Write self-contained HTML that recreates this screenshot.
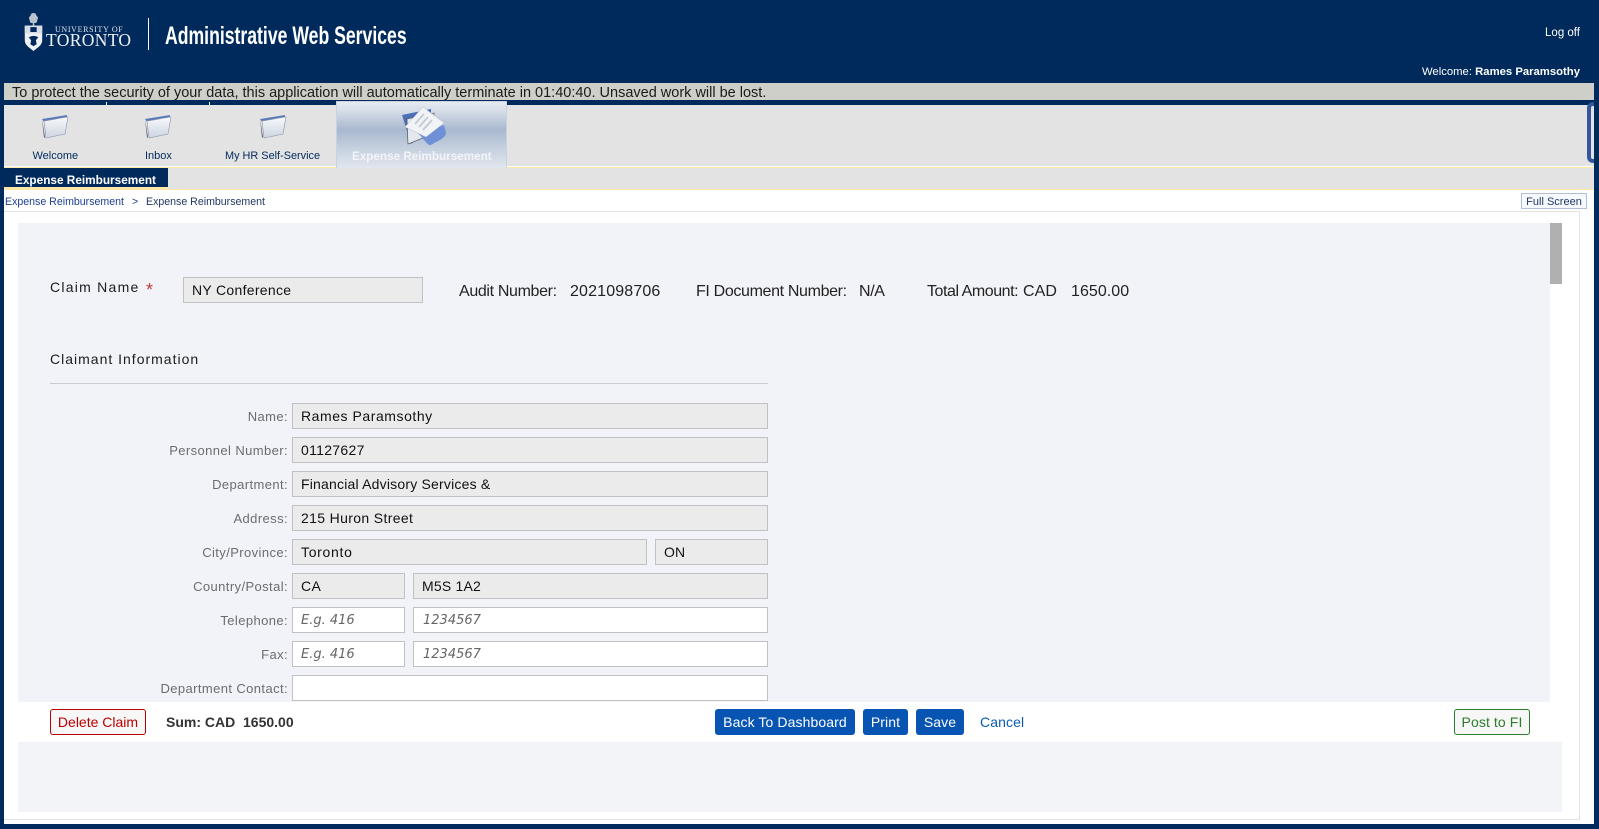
<!DOCTYPE html>
<html><head><meta charset="utf-8"><title>Expense Reimbursement</title>
<style>
html,body{margin:0;padding:0;width:1599px;height:829px;overflow:hidden;background:#002a5c;font-family:"Liberation Sans",sans-serif}
.b{position:absolute}
.t{position:absolute;white-space:nowrap}
.f{position:absolute;box-sizing:border-box;height:26px;border:1px solid #bfc1c3;background:#ebebeb;color:#111;font-size:14px;line-height:25px;padding-left:8px;letter-spacing:.45px;white-space:nowrap}
.w{background:#fff}
.p{color:#666;font-style:italic;font-family:"DejaVu Sans",sans-serif;font-size:13px;letter-spacing:0;line-height:26px}
.l{position:absolute;right:1311px;color:#6a6d70;font-size:13px;letter-spacing:.4px;line-height:18px;white-space:nowrap}
.btn{position:absolute;box-sizing:border-box;top:709px;height:26px;border-radius:3px;font-size:14px;line-height:25px;text-align:center;letter-spacing:.1px}
.blue{background:#0854b3;color:#fff;line-height:26px}
.tab{position:absolute;top:150px;font-size:11px;color:#002a5c;white-space:nowrap}
.info{position:absolute;top:283px;font-size:16px;color:#222;white-space:nowrap;line-height:18px;letter-spacing:-.35px}
</style></head><body>

<!-- logo -->
<svg class="b" style="left:24px;top:12px" width="19" height="40" viewBox="0 0 24 41" preserveAspectRatio="none">
<path d="M12 1c3 0 4 2 3.500 3 2 0 3 3 1 4.500 1 2-2 3.500-3.500 2.500v3h-2v-3c-2 1-4.500-.5-3.500-2.500-2-1.500-1-4.500 1-4.500C8 3 9 1 12 1z" fill="#b9c3d0"/>
<path d="M1 14h22v15c0 5-5 7-11 11C6 36 1 34 1 29z" fill="#eef1f5"/>
<rect x="1" y="14" width="22" height="8" fill="#d8dde5"/><rect x="8" y="15.500" width="8" height="5" fill="#002a5c"/>
<path d="M6 26c4-2 9-2 12 0l-3 3 1 4-4 2-4-2 1-4z" fill="#002a5c"/></svg>
<div class="t" style="left:55px;top:25px;font:8px 'Liberation Serif',serif;color:#dfe4ea;letter-spacing:.65px">UNIVERSITY OF</div>
<div class="t" style="left:46px;top:30px;font:17.500px/20px 'Liberation Serif',serif;color:#eef1f5;letter-spacing:.35px">TORONTO</div>
<div class="b" style="left:148px;top:18px;width:1px;height:32px;background:#fff"></div>
<div class="t" style="left:165px;top:21px;font:bold 25px/30px 'Liberation Sans',sans-serif;color:#fff;transform:scaleX(.705);transform-origin:0 0;">Administrative Web Services</div>

<div class="t" style="right:19px;top:27px;font-size:11.500px;color:#fff">Log off</div>
<div class="t" style="right:19px;top:66px;font-size:11.300px;color:#fff">Welcome: <b>Rames Paramsothy</b></div>

<!-- timeout bar -->
<div class="b" style="left:4px;top:83px;width:1590px;height:17px;background:#cfcfca"></div>
<div class="t" style="left:12px;top:84px;font-size:14.500px;line-height:18px;color:#1a1a1a">To protect the security of your data, this application will automatically terminate in 01:40:40. Unsaved work will be lost.</div>

<!-- tabs -->
<div class="b" style="left:4px;top:105px;width:1590px;height:61px;background:#e3e3e3"></div>
<div class="b" style="left:4px;top:166px;width:1590px;height:1px;background:#fff"></div>
<div class="b" style="left:4px;top:167px;width:1590px;height:1px;background:#fbe7a6"></div>
<div class="b" style="left:106px;top:102px;width:1px;height:3px;background:#fff"></div>
<div class="b" style="left:209px;top:102px;width:1px;height:3px;background:#fff"></div>
<svg width="0" height="0" style="position:absolute"><defs>
<linearGradient id="fg" x1="0" y1="0" x2="0" y2="1"><stop offset="0" stop-color="#f8f9fc"/><stop offset="1" stop-color="#ccd5e2"/></linearGradient>
</defs></svg>
<svg class="b" style="left:40px;top:113px" width="30" height="28" viewBox="0 0 30 28"><path d="M2 6L27 2v3L4 9z" fill="#5b7cb8"/><path d="M2 6l3 18-1 1z" fill="#5a6478"/><path d="M4 8c8-1 16-3 24-4l-3 17-19 4z" fill="url(#fg)" stroke="#8a94a6" stroke-width=".6"/></svg>
<svg class="b" style="left:143px;top:113px" width="30" height="28" viewBox="0 0 30 28"><path d="M2 6L27 2v3L4 9z" fill="#5b7cb8"/><path d="M2 6l3 18-1 1z" fill="#5a6478"/><path d="M4 8c8-1 16-3 24-4l-3 17-19 4z" fill="url(#fg)" stroke="#8a94a6" stroke-width=".6"/></svg>
<svg class="b" style="left:258px;top:113px" width="30" height="28" viewBox="0 0 30 28"><path d="M2 6L27 2v3L4 9z" fill="#5b7cb8"/><path d="M2 6l3 18-1 1z" fill="#5a6478"/><path d="M4 8c8-1 16-3 24-4l-3 17-19 4z" fill="url(#fg)" stroke="#8a94a6" stroke-width=".6"/></svg>
<div class="tab" style="left:32.500px">Welcome</div>
<div class="tab" style="left:145px">Inbox</div>
<div class="tab" style="left:225px;font-size:10.900px">My HR Self-Service</div>

<div class="b" style="left:336px;top:101px;width:171px;height:67px;box-sizing:border-box;border:1px solid #c8d2e0;border-bottom:0;background:linear-gradient(#e6ebf2 0,#d8dfe9 12%,#a9b8cf 42%,#c5d0df 70%,#e1e6ee 100%)"></div>
<svg class="b" style="left:402px;top:106px" width="44" height="41" viewBox="0 0 44 41">
<path d="M0 9L29 3v19L9 38z" fill="#4d6fb5"/><path d="M5 13l27-6 1 20-27 11z" fill="#e4e9f0" stroke="#444" stroke-width=".6"/>
<path d="M12 25c9-1 19-2 30-6l2 8c-1 6-9 8-15 12-5 1-7-9-17-14z" fill="#6f8fd6"/>
<path d="M3 21L21 1l21 16-18 14z" fill="#f1f3f7" stroke="#b8c1cf" stroke-width=".5"/>
<path d="M13 18l9-10M17 21l9-10M21 24l9-10" stroke="#c6ccd6" stroke-width="2"/></svg>
<div class="t" style="left:352px;top:150px;font:bold 11.700px/14px 'Liberation Sans',sans-serif;color:#f2f4f8">Expense Reimbursement</div>
<div class="b" style="left:1587px;top:102px;width:12px;height:61px;box-sizing:border-box;border:4px solid #34569b;border-right:0;border-radius:6px 0 0 6px;background:#e3e3e3"></div>
<div class="b" style="left:1594px;top:100px;width:5px;height:70px;background:#002a5c"></div>

<!-- second nav -->
<div class="b" style="left:4px;top:168px;width:1590px;height:21px;background:#e3e3e3"></div>
<div class="b" style="left:4px;top:189px;width:1590px;height:1px;background:#fbe7a6"></div>
<div class="b" style="left:4px;top:168px;width:164px;height:19px;background:#002a5c"></div>
<div class="b" style="left:4px;top:187px;width:164px;height:3px;background:#fbe7a6"></div>
<div class="t" style="left:15px;top:173px;font:bold 11.800px/14px 'Liberation Sans',sans-serif;color:#fff">Expense Reimbursement</div>

<!-- white main -->
<div class="b" style="left:4px;top:190px;width:1590px;height:634px;background:#fff"></div>
<div class="t" style="left:5px;top:195px;font-size:10.600px;line-height:14px;color:#1c3f94">Expense Reimbursement</div>
<div class="t" style="left:132px;top:195px;font-size:10.600px;line-height:14px;color:#1c3f94">&gt;</div>
<div class="t" style="left:146px;top:195px;font-size:10.600px;line-height:14px;color:#1f3864">Expense Reimbursement</div>
<div class="b" style="left:1521px;top:193px;width:66px;height:16px;box-sizing:border-box;border:1px solid #b3bfd6;background:#f6f9fd;color:#1f3864;font-size:11px;line-height:16px;text-align:center">Full Screen</div>
<div class="b" style="left:4px;top:211px;width:1576px;height:609px;box-sizing:border-box;border:1px solid #e3e3e3;border-left:0;"></div>

<!-- form panel -->
<div class="b" style="left:18px;top:223px;width:1532px;height:479px;background:#f2f3f8"></div>
<div class="b" style="left:1550px;top:223px;width:12px;height:61px;background:#b0b0b0"></div>

<div class="t" style="left:50px;top:278px;font-size:14px;line-height:18px;color:#1c1c1c;letter-spacing:1.25px">Claim Name</div>
<div class="t" style="left:146px;top:281px;font-size:18px;line-height:18px;color:#c23b3b">*</div>
<div class="f" style="left:183px;top:277px;width:240px;letter-spacing:.3px">NY Conference</div>
<div class="info" style="left:459px">Audit Number:</div>
<div class="info" style="left:570px;letter-spacing:.15px">2021098706</div>
<div class="info" style="left:696px">FI Document Number:</div>
<div class="info" style="left:859px">N/A</div>
<div class="info" style="left:927px;letter-spacing:-.45px">Total Amount:</div>
<div class="info" style="left:1023px;letter-spacing:.1px">CAD</div>
<div class="info" style="left:1071px;letter-spacing:.05px">1650.00</div>

<div class="t" style="left:50px;top:350px;font-size:14px;line-height:18px;color:#1c1c1c;letter-spacing:1px">Claimant Information</div>
<div class="b" style="left:50px;top:383px;width:718px;height:1px;background:#c9cbd0"></div>

<div class="l" style="top:408px">Name:</div><div class="f" style="left:292px;top:403px;width:476px;letter-spacing:.55px">Rames Paramsothy</div>
<div class="l" style="top:442px">Personnel Number:</div><div class="f" style="left:292px;top:437px;width:476px;letter-spacing:.3px">01127627</div>
<div class="l" style="top:476px">Department:</div><div class="f" style="left:292px;top:471px;width:476px;letter-spacing:.2px">Financial Advisory Services &amp;</div>
<div class="l" style="top:510px">Address:</div><div class="f" style="left:292px;top:505px;width:476px;letter-spacing:.35px">215 Huron Street</div>
<div class="l" style="top:544px">City/Province:</div><div class="f" style="left:292px;top:539px;width:355px;letter-spacing:.7px">Toronto</div><div class="f" style="left:655px;top:539px;width:113px;letter-spacing:.1px">ON</div>
<div class="l" style="top:578px">Country/Postal:</div><div class="f" style="left:292px;top:573px;width:113px">CA</div><div class="f" style="left:413px;top:573px;width:355px;letter-spacing:.2px">M5S 1A2</div>
<div class="l" style="top:612px">Telephone:</div><div class="f w p" style="left:292px;top:607px;width:113px">E.g. 416</div><div class="f w p" style="left:413px;top:607px;width:355px;padding-left:9px">1234567</div>
<div class="l" style="top:646px">Fax:</div><div class="f w p" style="left:292px;top:641px;width:113px">E.g. 416</div><div class="f w p" style="left:413px;top:641px;width:355px;padding-left:9px">1234567</div>
<div class="l" style="top:680px">Department Contact:</div><div class="f w" style="left:292px;top:675px;width:476px"></div>

<!-- action bar -->
<div class="btn" style="left:50px;width:96px;border:1px solid #bb0000;background:#f7f7f7;color:#bb0000;letter-spacing:0">Delete Claim</div>
<div class="t" style="left:166px;top:714px;font:bold 14px/16px 'Liberation Sans',sans-serif;color:#333;white-space:pre">Sum: CAD  1650.00</div>
<div class="btn blue" style="left:715px;width:140px">Back To Dashboard</div>
<div class="btn blue" style="left:863px;width:45px">Print</div>
<div class="btn blue" style="left:916px;width:48px">Save</div>
<div class="t" style="left:980px;top:714px;font-size:14px;line-height:16px;color:#0a5cb0;letter-spacing:.1px">Cancel</div>
<div class="btn" style="left:1454px;width:76px;border:1px solid #2b7d2b;background:#f7f7f7;color:#2b7d2b">Post to FI</div>

<div class="b" style="left:18px;top:742px;width:1544px;height:70px;background:#f3f4f7"></div>
</body></html>
